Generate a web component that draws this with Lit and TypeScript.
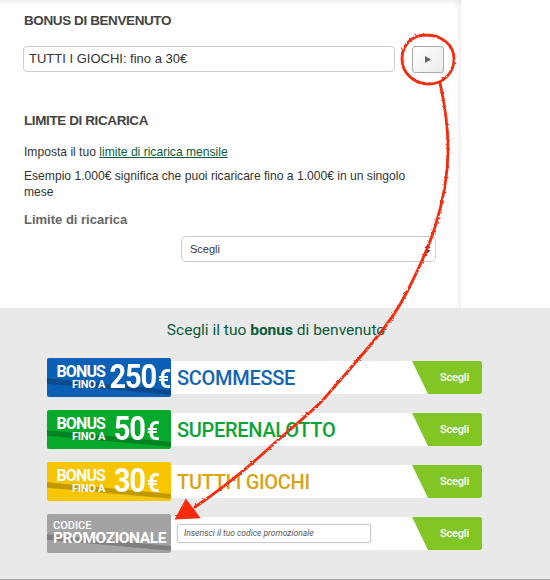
import { LitElement, css, html, svg } from "lit";
import { customElement } from "lit/decorators.js";

const offers = [
    { kind: "blue", amount: "250", title: "SCOMMESSE" },
    { kind: "green", amount: "50", title: "SUPERENALOTTO" },
    { kind: "amber", amount: "30", title: "TUTTI I GIOCHI" },
];

@customElement("app-root")
export class AppRoot extends LitElement {
    static styles = css`
        :host {
            display: block;
            position: relative;
            width: 550px;
            height: 580px;
            overflow: hidden;
            background: #fff;
            font-family: "Liberation Sans", Arial, sans-serif;
            color: #333;
        }
        .panel {
            box-sizing: border-box;
            width: 461px;
            height: 308px;
            padding: 13px 25px 0 24px;
            background: linear-gradient(#f1f1f1, #fff 6px);
            box-shadow: inset -8px 0 7px -7px rgba(0, 0, 0, 0.1);
        }
        h2 {
            margin: 0;
            font-size: 13.5px;
            line-height: 16px;
            font-weight: 700;
            color: #444;
            letter-spacing: -0.4px;
        }
        .bonus {
            display: flex;
            gap: 17px;
            margin: 17px 0 40px -1px;
            width: 421px;
        }
        .field {
            box-sizing: border-box;
            flex: 1;
            height: 26px;
            padding-left: 5px;
            border: 1px solid #ccc;
            border-radius: 4px;
            font-size: 13px;
            line-height: 24px;
            color: #333;
        }
        .play {
            display: flex;
            align-items: center;
            justify-content: center;
            box-sizing: border-box;
            width: 32px;
            height: 27px;
            border: 1px solid #aaa;
            border-radius: 3px;
            background: linear-gradient(135deg, #fff, #ebebeb);
        }
        p {
            margin: 0;
            max-width: 395px;
            font-size: 12.1px;
            line-height: 16px;
        }
        p.intro {
            margin: 15px 0 8px;
        }
        a {
            color: #0a5c3a;
            text-decoration: underline;
        }
        .label {
            margin-top: 12px;
            font-size: 13px;
            line-height: 16px;
            font-weight: 700;
            color: #666;
        }
        .select {
            display: flex;
            align-items: center;
            justify-content: space-between;
            box-sizing: border-box;
            width: 255px;
            height: 26px;
            margin: 8px 0 0 157px;
            padding: 0 4px 1px 8px;
            border: 1px solid #ccc;
            border-radius: 5px;
            font-size: 11px;
            color: #333;
        }
        .offers {
            box-sizing: border-box;
            height: 272px;
            padding-top: 14px;
            background: #e9e9e9;
            border-bottom: 1px solid #aaa;
            font-family: Roboto, sans-serif;
        }
        .offers h3 {
            margin: 0 0 19px;
            padding-left: 2px;
            font-size: 15.5px;
            line-height: 17px;
            font-weight: 400;
            color: #0a5c3a;
            text-align: center;
        }
        .offers h3 b {
            font-weight: 700;
        }
        .rows {
            display: flex;
            flex-direction: column;
            gap: 13px;
            width: 435px;
            margin-left: 47px;
        }
        .row {
            display: flex;
            align-items: center;
            height: 39px;
        }
        .blue {
            --fill: #0b5fb4;
            --ink: #1565b5;
        }
        .green {
            --fill: #07a82c;
            --ink: #0aa537;
        }
        .amber {
            --fill: #f7c600;
            --ink: #d8a317;
        }
        .grey {
            --fill: #a3a3a3;
        }
        .badge {
            position: relative;
            display: flex;
            align-items: center;
            flex: none;
            box-sizing: border-box;
            width: 124px;
            height: 39px;
            padding-left: 9px;
            border-radius: 2px;
            overflow: hidden;
            background: var(--fill);
            color: #fff;
            font-weight: 700;
        }
        .badge::before {
            content: "";
            position: absolute;
            inset: 0;
            background: rgba(0, 0, 0, 0.22);
            clip-path: polygon(0 52%, 100% 82%, 100% 94%, 0 66%);
        }
        .badge > * {
            position: relative;
        }
        .words {
            display: flex;
            flex-direction: column;
            align-items: flex-end;
            width: 49px;
            flex: none;
        }
        .words span:first-child {
            font-size: 16px;
            line-height: 14px;
            letter-spacing: -0.9px;
        }
        .words span:last-child {
            font-size: 11px;
            line-height: 12px;
            letter-spacing: -0.3px;
        }
        .amount {
            flex: 1;
            display: flex;
            justify-content: center;
            align-items: baseline;
            padding-right: 4px;
            font-size: 33px;
            line-height: 36px;
            letter-spacing: -1.2px;
            transform: scaleX(0.88);
        }
        .amount small {
            font-size: 26px;
            margin-left: 2px;
        }
        .code {
            display: flex;
            flex-direction: column;
            margin-left: -3px;
        }
        .code span:first-child {
            font-size: 11px;
            line-height: 10px;
            font-weight: 500;
        }
        .code span:last-child {
            font-size: 15.5px;
            line-height: 15px;
            letter-spacing: -0.4px;
        }
        .strip {
            flex: 1;
            display: flex;
            align-items: center;
            justify-content: space-between;
            height: 33px;
            padding-left: 6px;
            background: #fff;
        }
        .title {
            font-size: 20px;
            font-weight: 500;
            color: var(--ink);
            letter-spacing: -0.3px;
        }
        .code-input {
            box-sizing: border-box;
            width: 194px;
            height: 19px;
            padding-left: 6px;
            border: 1px solid #ccc;
            border-radius: 2px;
            box-shadow: 0 0 2px #ddd;
            font-size: 8.5px;
            line-height: 17px;
            font-style: italic;
            color: #555;
        }
        .pick {
            display: flex;
            align-items: center;
            justify-content: flex-end;
            box-sizing: border-box;
            width: 70px;
            height: 33px;
            padding-right: 13px;
            background: #82c626;
            border-radius: 0 2px 2px 0;
            clip-path: polygon(0 0, 100% 0, 100% 100%, 16px 100%);
            color: #fff;
            font-size: 11px;
            font-weight: 500;
            letter-spacing: -0.2px;
        }
        .marks {
            position: absolute;
            inset: 0;
            pointer-events: none;
        }
    `;

    renderOffer(offer: (typeof offers)[number]) {
        return html`<div class="row ${offer.kind}">
            <div class="badge">
                <div class="words"><span>BONUS</span><span>FINO A</span></div>
                <div class="amount">${offer.amount}<small>€</small></div>
            </div>
            <div class="strip">
                <span class="title">${offer.title}</span>
                <div class="pick">Scegli</div>
            </div>
        </div>`;
    }

    renderMarks() {
        return svg`<svg class="marks" width="550" height="580" viewBox="0 0 550 580">
            <defs>
                <filter id="rough" x="-5%" y="-5%" width="110%" height="110%">
                    <feTurbulence type="fractalNoise" baseFrequency="0.35" numOctaves="2" seed="4" />
                    <feDisplacementMap in="SourceGraphic" scale="2.5" />
                </filter>
            </defs>
            <g filter="url(#rough)" fill="none" stroke="#f62b0c" stroke-width="2.8" stroke-linecap="round">
                <path d="M426 35 C412 35 402 45 402 59 C402 74 415 84 429 84 C444 84 454 72 454 59 C454 45 442 35 426 35" />
                <path d="M440 83 C445 105 448 125 448 150 C448 180 442 205 435 227 C428 250 418 270 408 290 C398 310 385 328 372 343 C358 360 340 380 323 400 C305 418 285 433 267 450 C245 470 220 490 195 507" />
                <path d="M177 518 L186 501 L198 517 Z" fill="#f62b0c" />
            </g>
        </svg>`;
    }

    render() {
        return html`
            <section class="panel">
                <h2>BONUS DI BENVENUTO</h2>
                <div class="bonus">
                    <div class="field">TUTTI I GIOCHI: fino a 30€</div>
                    <div class="play">
                        <svg width="6" height="7" viewBox="0 0 6 7"><path d="M0 0 L6 3.5 L0 7 Z" fill="#666" /></svg>
                    </div>
                </div>
                <h2>LIMITE DI RICARICA</h2>
                <p class="intro">Imposta il tuo <a href="#">limite di ricarica mensile</a></p>
                <p>Esempio 1.000€ significa che puoi ricaricare fino a 1.000€ in un singolo mese</p>
                <div class="label">Limite di ricarica</div>
                <div class="select">
                    <span>Scegli</span>
                    <svg width="7" height="10" viewBox="0 0 7 10"><path d="M0.5 4 L3.5 0.5 L6.5 4 Z M0.5 6 L6.5 6 L3.5 9.5 Z" fill="#444" /></svg>
                </div>
            </section>
            <section class="offers">
                <h3>Scegli il tuo <b>bonus</b> di benvenuto</h3>
                <div class="rows">
                    ${offers.map((offer) => this.renderOffer(offer))}
                    <div class="row grey">
                        <div class="badge">
                            <div class="code"><span>CODICE</span><span>PROMOZIONALE</span></div>
                        </div>
                        <div class="strip">
                            <div class="code-input">Inserisci il tuo codice promozionale</div>
                            <div class="pick">Scegli</div>
                        </div>
                    </div>
                </div>
            </section>
            ${this.renderMarks()}
        `;
    }
}

declare global {
    interface HTMLElementTagNameMap {
        "app-root": AppRoot;
    }
}
